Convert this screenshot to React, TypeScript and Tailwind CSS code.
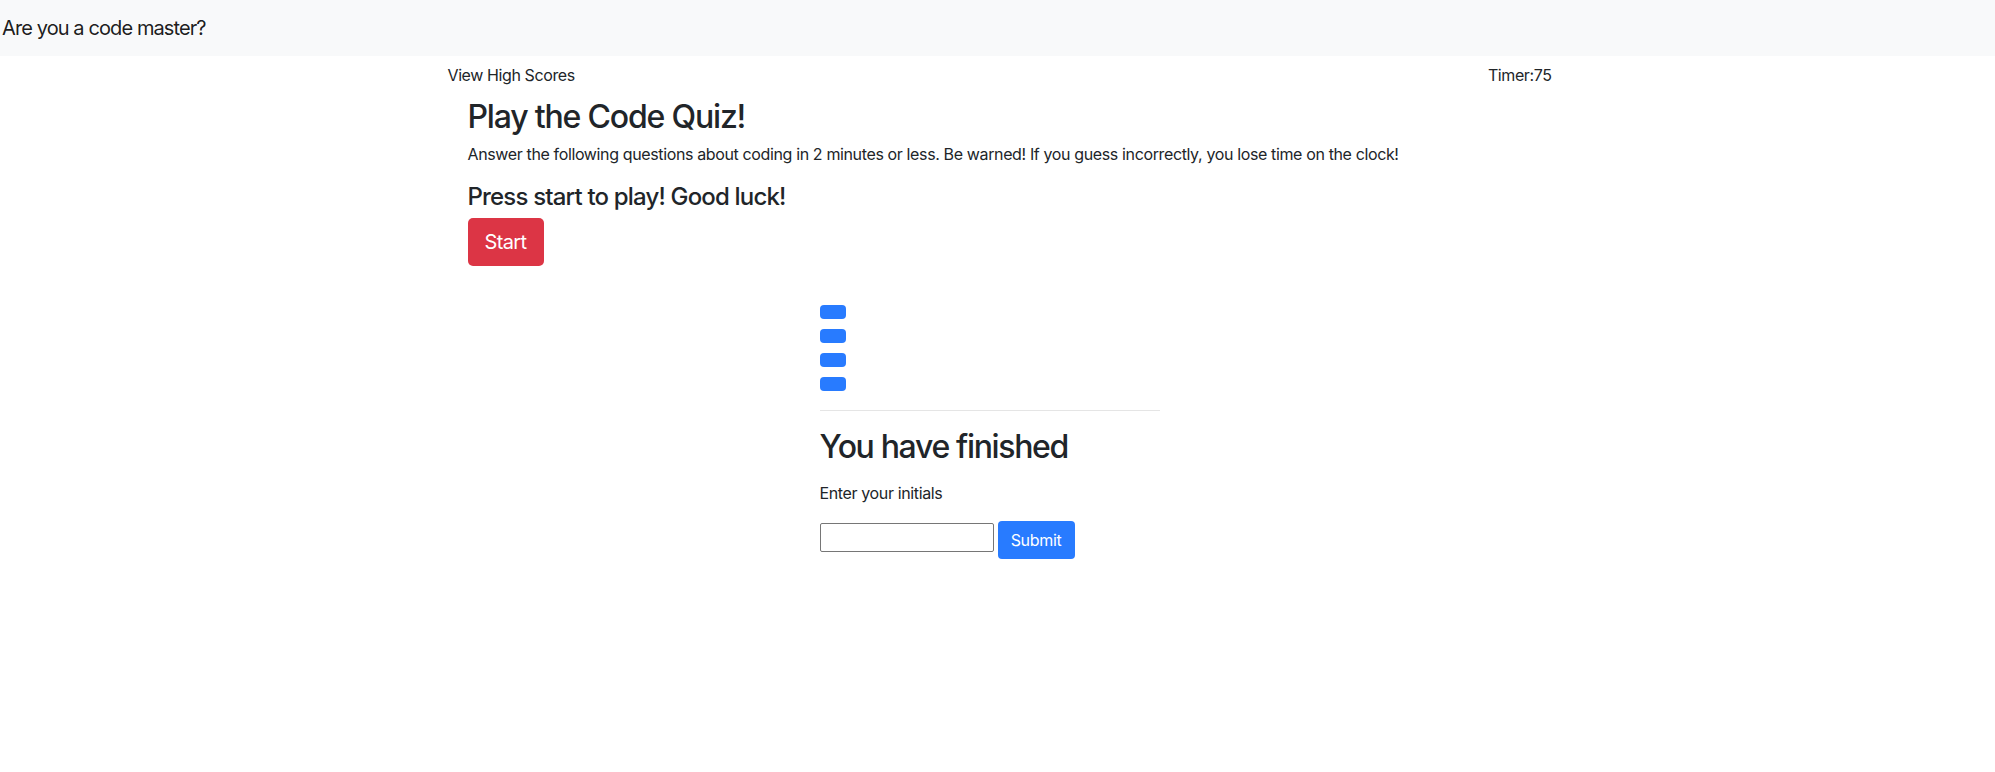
export default function App() {
  return (
    <div className="min-h-screen bg-white font-['Inter','Noto_Sans',sans-serif] text-[#212529]">
      <nav className="flex h-[56px] items-center bg-[#f8f9fa] pl-[2px]">
        <span className="text-[20px] leading-[30px] tracking-[-0.045em] text-black/90">Are you a code master?</span>
      </nav>

      <div className="mx-auto w-[1110px]">
        <div className="flex justify-between pl-[5px] pr-[1px] pt-[7px] text-[16px] leading-6 tracking-[-0.025em]">
          <a className="cursor-pointer">View High Scores</a>
          <span>Timer:75</span>
        </div>

        <div className="pl-[25px]">
          <h1 className="mt-[11px] text-[32px] font-medium leading-[1.2] tracking-[-0.037em]">Play the Code Quiz!</h1>
          <p className="mt-[6px] text-[16px] leading-6 tracking-[-0.023em]">
            Answer the following questions about coding in 2 minutes or less. Be warned! If you guess incorrectly, you lose time on the clock!
          </p>
          <h4 className="mt-[17px] text-[24px] font-medium leading-[1.2] tracking-[-0.034em]">Press start to play! Good luck!</h4>
          <button className="mt-[6px] h-[48px] w-[76px] rounded-[5px] bg-[#dc3545] text-[20px] tracking-[-0.03em] text-white">
            Start
          </button>
        </div>

        <div className="ml-[377px] w-[340px]">
          <div className="mt-[39px] flex flex-col gap-[10px]">
            <button className="h-[14px] w-[26px] rounded-[4px] bg-[#287bff]" />
            <button className="h-[14px] w-[26px] rounded-[4px] bg-[#287bff]" />
            <button className="h-[14px] w-[26px] rounded-[4px] bg-[#287bff]" />
            <button className="h-[14px] w-[26px] rounded-[4px] bg-[#287bff]" />
          </div>
          <hr className="mt-[19px] border-t border-black/10" />
          <h2 className="mt-[17px] text-[32px] font-medium leading-[1.2] tracking-[-0.042em]">You have finished</h2>
          <p className="mt-[14px] text-[16px] leading-6 tracking-[-0.023em]">Enter your initials</p>
          <form className="mt-[16px] flex items-start" onSubmit={(e) => e.preventDefault()}>
            <input
              type="text"
              className="mt-[2px] h-[29px] w-[174px] rounded-[2px] border border-[#767676] px-1 text-[13px]"
            />
            <button className="ml-[4px] h-[38px] w-[77px] rounded-[4px] bg-[#287bff] text-[16px] tracking-[-0.02em] text-white">
              Submit
            </button>
          </form>
        </div>
      </div>
    </div>
  );
}
